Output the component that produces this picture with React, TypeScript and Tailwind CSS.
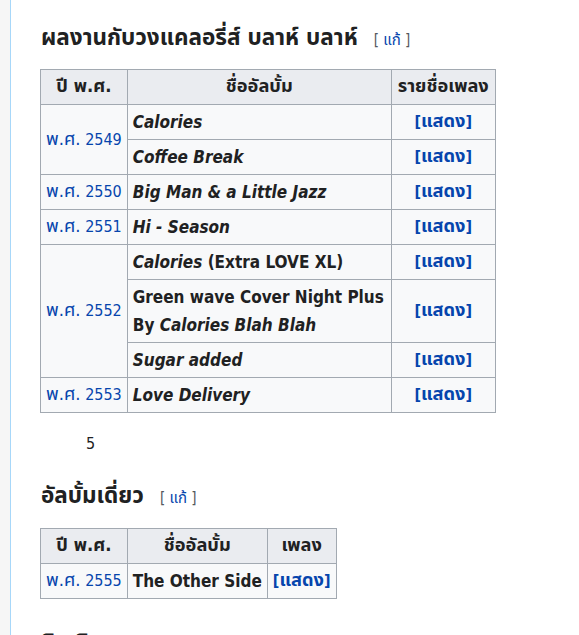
const font = {
  fontFamily: '"DejaVu Sans Condensed", "DejaVu Sans", "Noto Sans Thai", "Noto Sans", sans-serif',
};

// Thai glyphs come from a fallback font that runs small, so bump them up a bit
const T = ({ children }: { children: React.ReactNode }) => (
  <span className="text-[1.14em] leading-none">{children}</span>
);

type Album = { year?: string; span?: number; title: React.ReactNode };

const albums: Album[] = [
  { year: "2549", span: 2, title: <i>Calories</i> },
  { title: <i>Coffee Break</i> },
  { year: "2550", title: <i>Big Man &amp; a Little Jazz</i> },
  { year: "2551", title: <i>Hi - Season</i> },
  {
    year: "2552",
    span: 3,
    title: (
      <>
        <i>Calories</i> (Extra LOVE XL)
      </>
    ),
  },
  {
    title: (
      <>
        Green wave Cover Night Plus
        <br />
        By <i>Calories Blah Blah</i>
      </>
    ),
  },
  { title: <i>Sugar added</i> },
  { year: "2553", title: <i>Love Delivery</i> },
];

const SectionTitle = ({ text }: { text: string }) => (
  <h2 className="flex items-baseline text-[22.5px] font-bold leading-[26px] text-[#202122]">
    {text}
    <span className="ml-[16px] text-[15px] font-normal text-[#54595d]">
      [ <span className="text-[#0645ad]">แก้</span> ]
    </span>
  </h2>
);

const th = "border border-[#a2a9b1] bg-[#eaecf0] px-[5px] py-[3px] text-center font-bold leading-[28px]";
const td = "border border-[#a2a9b1] bg-[#f8f9fa] px-[5px] py-[3px] leading-[28px]";

const Year = ({ y }: { y: string }) => (
  <>
    <T>พ.ศ.</T> {y}
  </>
);

const Show = () => (
  <>
    [<T>แสดง</T>]
  </>
);

export default function App() {
  return (
    <div className="flex min-h-[635px] bg-[#f6f6f6]" style={font}>
      <div className="w-[10px] shrink-0" />
      <div className="flex-1 border-l border-[#a7d7f9] bg-white pl-[29px] pt-[24px] text-[16px] text-[#202122]">
        <div className="pl-px">
          <SectionTitle text="ผลงานกับวงแคลอรี่ส์ บลาห์ บลาห์" />
        </div>
        <table className="mt-[16px] border-collapse">
          <thead>
            <tr>
              <th className={`${th} w-[86px]`}>
                <T>ปี พ.ศ.</T>
              </th>
              <th className={`${th} w-[264px]`}>
                <T>ชื่ออัลบั้ม</T>
              </th>
              <th className={`${th} w-[104px]`}>
                <T>รายชื่อเพลง</T>
              </th>
            </tr>
          </thead>
          <tbody>
            {albums.map((a, i) => (
              <tr key={i}>
                {a.year && (
                  <td rowSpan={a.span ?? 1} className={`${td} whitespace-nowrap text-[#0645ad]`}>
                    <Year y={a.year} />
                  </td>
                )}
                <td className={`${td} text-[17px] font-bold`}>{a.title}</td>
                <td className={`${td} text-center font-bold text-[#0645ad]`}>
                  <Show />
                </td>
              </tr>
            ))}
          </tbody>
        </table>

        <p className="ml-[46px] mt-[18px] leading-[26px]">5</p>

        <div className="mt-[25px] pl-px">
          <SectionTitle text="อัลบั้มเดี่ยว" />
        </div>
        <table className="mt-[17px] border-collapse">
          <thead>
            <tr>
              <th className={`${th} w-[86px]`}>
                <T>ปี พ.ศ.</T>
              </th>
              <th className={`${th} w-[139px]`}>
                <T>ชื่ออัลบั้ม</T>
              </th>
              <th className={`${th} w-[64px]`}>
                <T>เพลง</T>
              </th>
            </tr>
          </thead>
          <tbody>
            <tr>
              <td className={`${td} whitespace-nowrap text-[#0645ad]`}>
                <Year y="2555" />
              </td>
              <td className={`${td} whitespace-nowrap px-[4px] text-[17px] font-bold`}>The Other Side</td>
              <td className={`${td} whitespace-nowrap px-[3px] text-center font-bold text-[#0645ad]`}>
                <Show />
              </td>
            </tr>
          </tbody>
        </table>

        <div className="mt-[30px] pl-px">
          <SectionTitle text="ซิงเกิล" />
        </div>
      </div>
    </div>
  );
}
